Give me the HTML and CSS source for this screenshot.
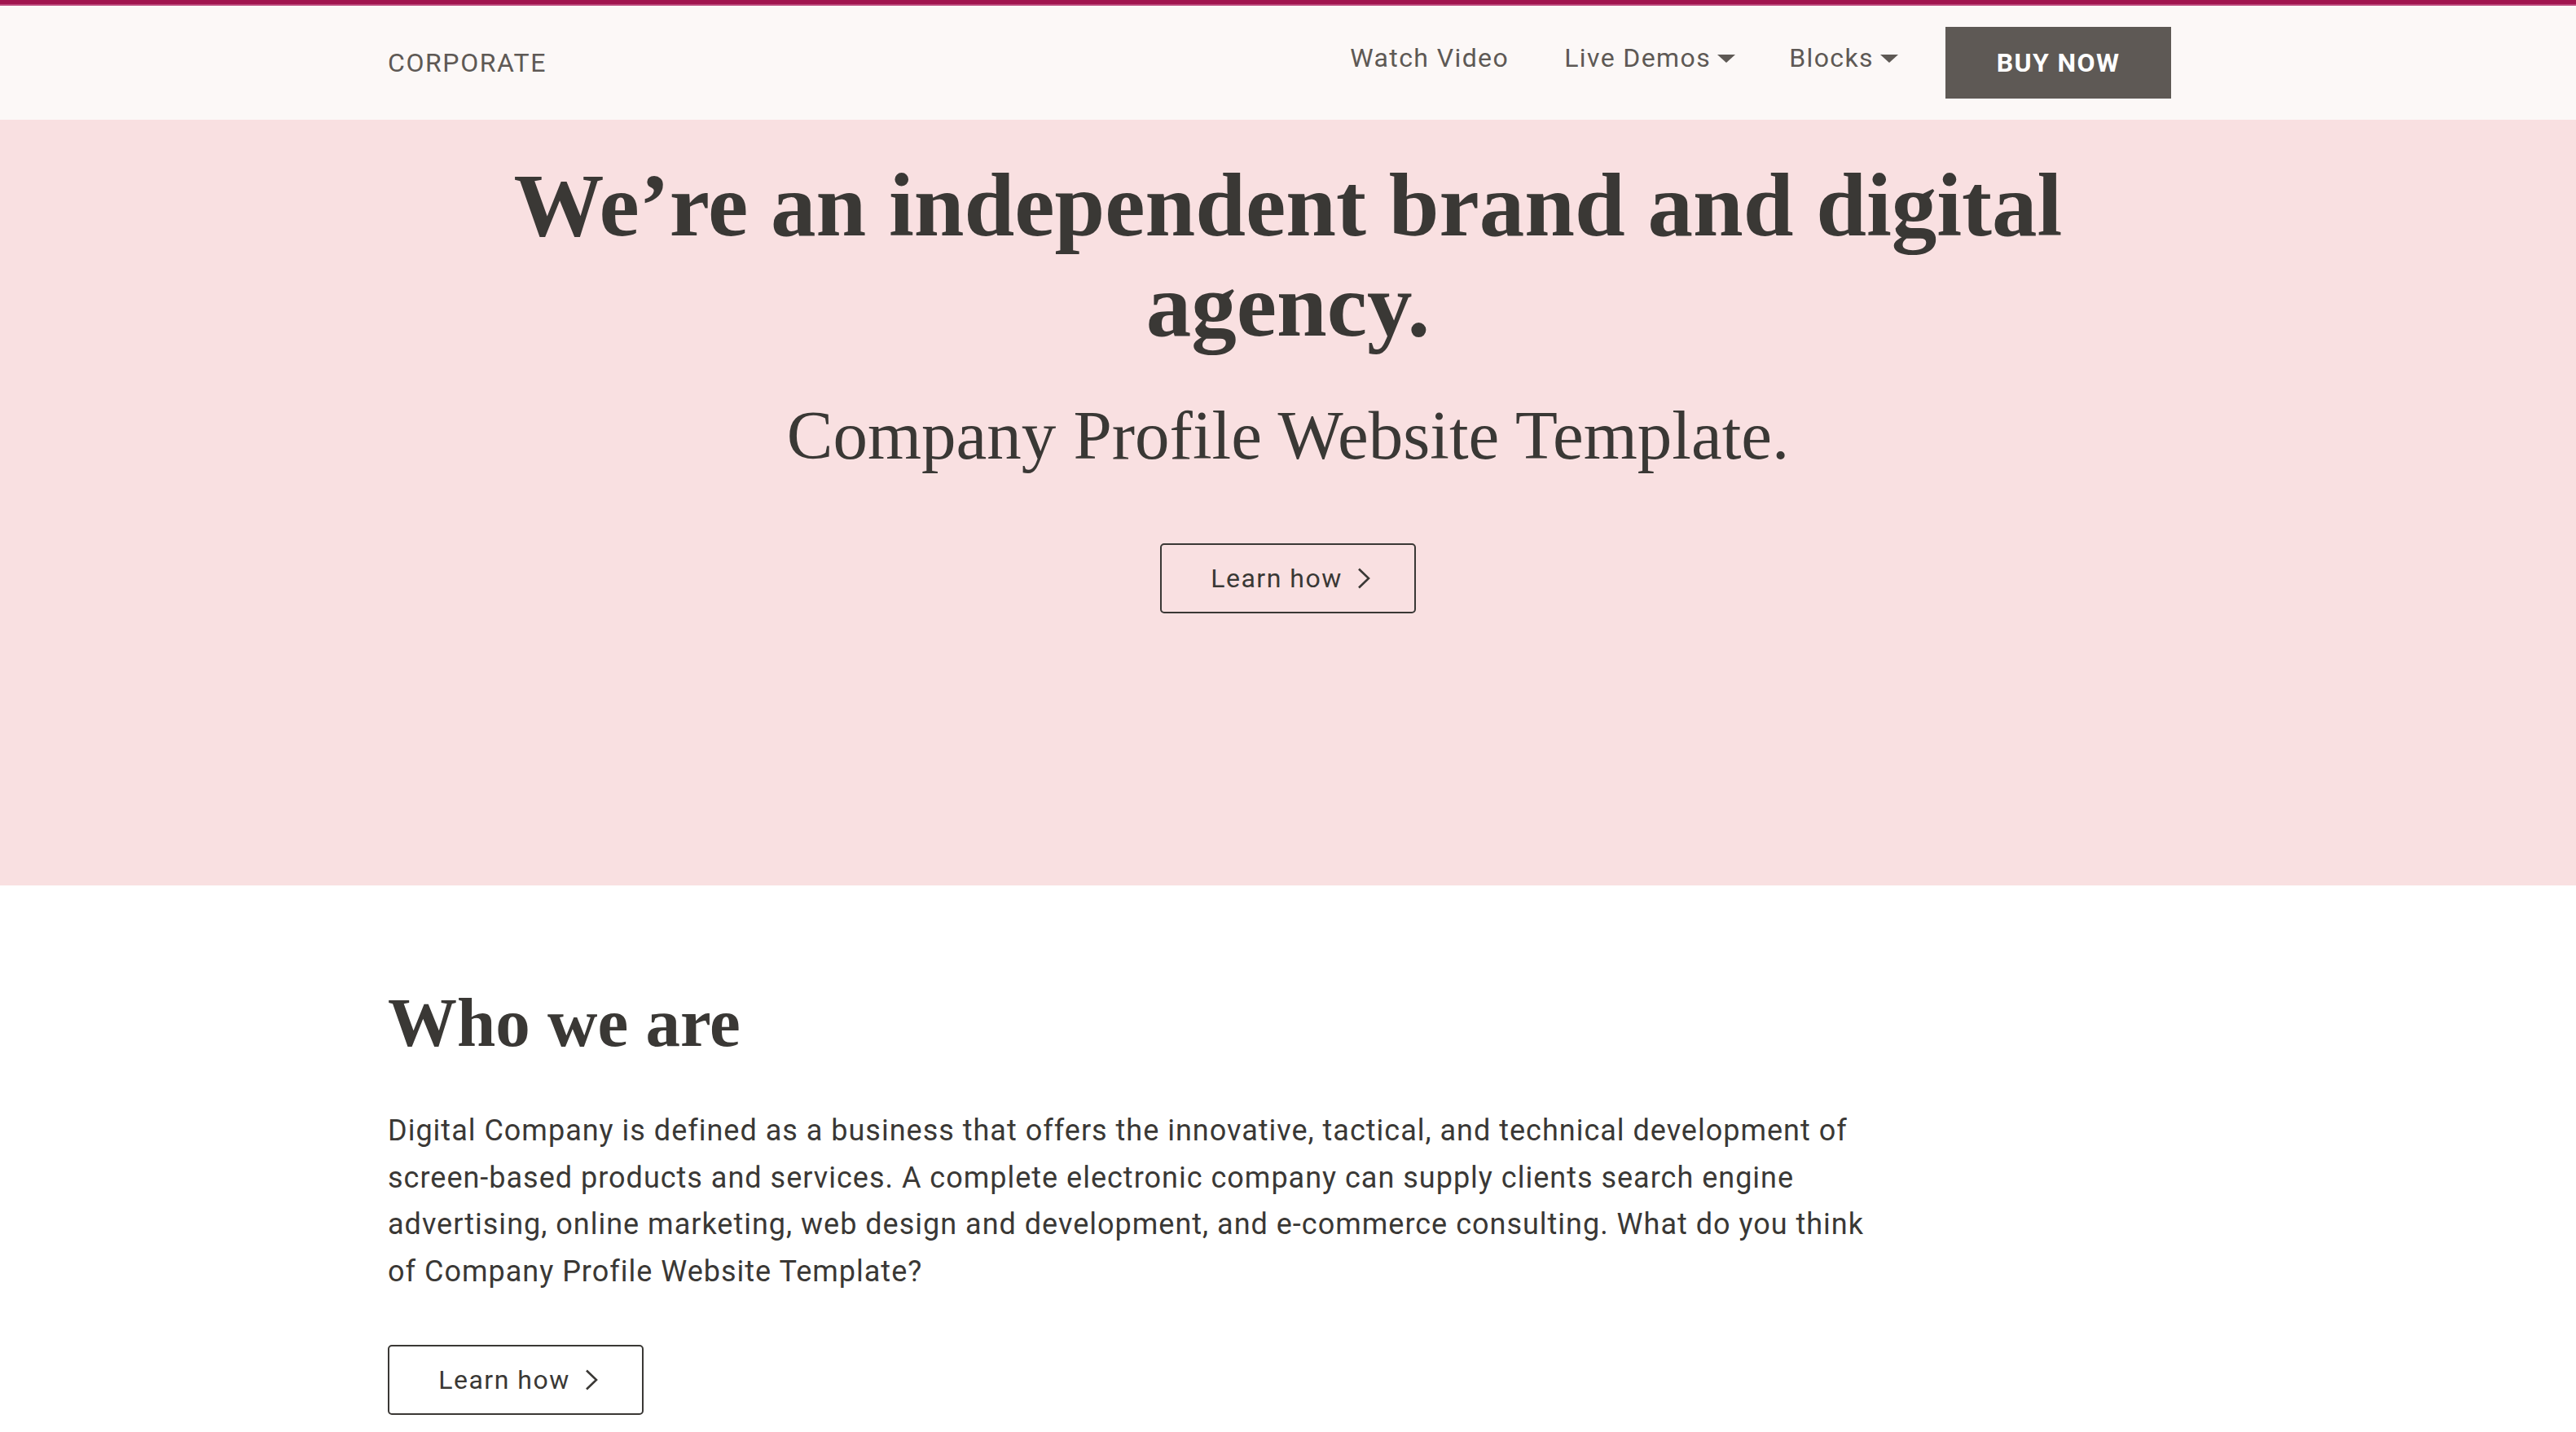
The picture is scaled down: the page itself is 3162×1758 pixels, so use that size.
FILE: index.html
```html
<!DOCTYPE html>
<html lang="en">
<head>
<meta charset="utf-8">
<title>Corporate</title>
<link rel="stylesheet" href="styles.css">
</head>
<body>
<div class="topline"></div>
<header class="site-header">
  <div class="nav-container">
    <a class="brand" href="#">CORPORATE</a>
    <nav class="nav">
      <ul class="nav-links">
        <li><a href="#">Watch Video</a></li>
        <li><a href="#" class="dropdown">Live Demos<span class="caret"></span></a></li>
        <li><a href="#" class="dropdown">Blocks<span class="caret"></span></a></li>
      </ul>
      <a class="buy-btn" href="#">BUY NOW</a>
    </nav>
  </div>
</header>

<section class="hero">
  <h1 class="hero-title">We’re an independent brand and digital<br>agency.</h1>
  <p class="hero-sub">Company Profile Website Template.</p>
  <a class="outline-btn" href="#">Learn how
    <svg class="chev" viewBox="0 0 16 26" width="16" height="26"><path d="M2 1.5 L14 13 L2 24.5" fill="none" stroke="#3a3835" stroke-width="2.6"/></svg>
  </a>
</section>

<section class="about">
  <h2 class="about-title">Who we are</h2>
  <p class="about-text">Digital Company is defined as a business that offers the innovative, tactical, and technical development of screen-based products and services. A complete electronic company can supply clients search engine advertising, online marketing, web design and development, and e-commerce consulting. What do you think of Company Profile Website Template?</p>
  <a class="outline-btn" href="#">Learn how
    <svg class="chev" viewBox="0 0 16 26" width="16" height="26"><path d="M2 1.5 L14 13 L2 24.5" fill="none" stroke="#3a3835" stroke-width="2.6"/></svg>
  </a>
</section>
</body>
</html>
```

FILE: styles.css
```css
* { box-sizing: border-box; }
html, body { margin: 0; padding: 0; }
body {
  font-family: Roboto, "Liberation Sans", sans-serif;
  color: #3a3835;
  background: #ffffff;
  overflow: hidden;
}
a { text-decoration: none; color: inherit; }

.topline {
  height: 7px;
  background: #a1154f;
  border-bottom: 2px solid #bb477a;
}

.site-header {
  background: #fcf8f7;
  height: 140px;
}
.nav-container {
  height: 100%;
  padding: 0 497px 0 476px;
  display: flex;
  align-items: center;
  justify-content: space-between;
}
.brand {
  font-size: 32px;
  letter-spacing: 1.6px;
  color: #5e5955;
}
.nav {
  display: flex;
  align-items: center;
}
.nav-links {
  list-style: none;
  margin: 0 0 13px 0;
  padding: 0;
  display: flex;
  gap: 66px;
}
.nav-links li:first-child { margin-right: 2px; }
.nav-links a {
  font-size: 32px;
  letter-spacing: 1.4px;
  color: #5e5955;
  display: inline-flex;
  align-items: center;
}
.caret {
  display: inline-block;
  width: 0;
  height: 0;
  margin-left: 8px;
  margin-top: 2px;
  border-left: 11px solid transparent;
  border-right: 11px solid transparent;
  border-top: 10px solid #5e5955;
}
.buy-btn {
  margin-left: 58px;
  width: 277px;
  height: 88px;
  background: #5e5955;
  color: #ffffff;
  font-size: 32px;
  font-weight: 700;
  letter-spacing: 1.4px;
  display: flex;
  align-items: center;
  justify-content: center;
}

.hero {
  background: #f9e0e1;
  height: 940px;
  padding-top: 43px;
  text-align: center;
}
.hero-title {
  margin: 0;
  font-family: "Liberation Serif", "DejaVu Serif", serif;
  font-weight: 700;
  font-size: 111px;
  line-height: 123px;
  color: #3a3835;
}
.hero-sub {
  margin: 51px 0 0 0;
  font-family: "Liberation Serif", "DejaVu Serif", serif;
  font-size: 85px;
  line-height: 94px;
  color: #3a3835;
}
.outline-btn {
  display: inline-flex;
  align-items: center;
  gap: 18px;
  height: 86px;
  width: 314px;
  justify-content: center;
  padding: 0 0 0 6px;
  border: 2px solid #3a3835;
  border-radius: 5px;
  font-size: 32px;
  letter-spacing: 1.5px;
  color: #3a3835;
}
.hero .outline-btn { margin-top: 86px; }
.chev { display: block; }

.about {
  padding: 118px 0 0 476px;
}
.about-title {
  margin: 0;
  font-family: "Liberation Serif", "DejaVu Serif", serif;
  font-weight: 700;
  font-size: 85px;
  line-height: 100px;
  color: #3a3835;
}
.about-text {
  margin: 55px 0 0 0;
  max-width: 1830px;
  font-size: 36px;
  line-height: 57.5px;
  letter-spacing: 1px;
  color: #3a3835;
}
.about .outline-btn { margin-top: 61px; }
```
